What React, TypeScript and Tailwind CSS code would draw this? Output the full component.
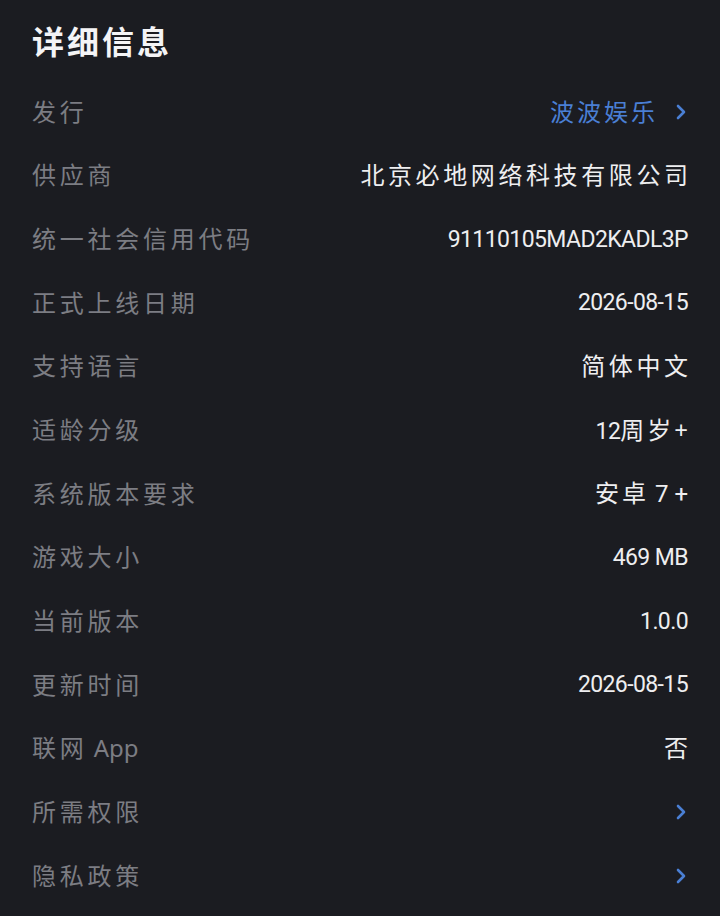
import type { ReactNode } from 'react'

type Row = {
  label: ReactNode
  value?: ReactNode
}

function Chevron() {
  return (
    <svg width="14" height="20" viewBox="0 0 14 20" fill="none" className="shrink-0">
      <path d="M4 4l6 6-6 6" stroke="#4a7fd4" strokeWidth="2.6" strokeLinecap="round" strokeLinejoin="round" />
    </svg>
  )
}

const cjk = 'tracking-[3.75px]'
const vcjk = 'tracking-[3.6px] mr-[-3.6px]'
const num = 'text-[23px] tracking-[-0.6px]'
const numFont = { fontFamily: 'Roboto, "Noto Sans CJK SC", sans-serif' }

const rows: Row[] = [
  {
    label: <span className={cjk}>发行</span>,
    value: (
      <span className="flex items-center gap-[16px] text-[#4a7fd4]">
        <span className="tracking-[3px]">波波娱乐</span>
        <Chevron />
      </span>
    ),
  },
  { label: <span className={cjk}>供应商</span>, value: <span className={vcjk}>北京必地网络科技有限公司</span> },
  {
    label: <span className={cjk}>统一社会信用代码</span>,
    value: (
      <span className={num} style={numFont}>
        91110105MAD2KADL3P
      </span>
    ),
  },
  {
    label: <span className={cjk}>正式上线日期</span>,
    value: (
      <span className={num} style={numFont}>
        2026-08-15
      </span>
    ),
  },
  { label: <span className={cjk}>支持语言</span>, value: <span className={vcjk}>简体中文</span> },
  {
    label: <span className={cjk}>适龄分级</span>,
    value: (
      <span className="flex items-baseline">
        <span className={num} style={numFont}>
          12
        </span>
        <span className="tracking-[3px]">周岁</span>+
      </span>
    ),
  },
  {
    label: <span className={cjk}>系统版本要求</span>,
    value: (
      <span className="flex items-baseline">
        <span className="tracking-[3px]">安卓</span>
        <span className="text-[24px]" style={numFont}>
          &nbsp;7 +
        </span>
      </span>
    ),
  },
  {
    label: <span className={cjk}>游戏大小</span>,
    value: (
      <span className={num} style={numFont}>
        469 MB
      </span>
    ),
  },
  {
    label: <span className={cjk}>当前版本</span>,
    value: (
      <span className={num} style={numFont}>
        1.0.0
      </span>
    ),
  },
  {
    label: <span className={cjk}>更新时间</span>,
    value: (
      <span className={num} style={numFont}>
        2026-08-15
      </span>
    ),
  },
  {
    label: (
      <span>
        <span className={cjk}>联网</span> App
      </span>
    ),
    value: <span>否</span>,
  },
  { label: <span className={cjk}>所需权限</span>, value: <Chevron /> },
  { label: <span className={cjk}>隐私政策</span>, value: <Chevron /> },
]

export default function App() {
  return (
    <div
      className="min-h-[916px] w-full bg-[#1b1c21] px-[32px] pt-[20px]"
      style={{ fontFamily: '"Noto Sans", "Noto Sans CJK SC", sans-serif' }}
    >
      <h1 className="h-[44px] text-[32px] font-bold leading-[44px] tracking-[3px] text-[#f4f4f6]">详细信息</h1>
      <div className="mt-[16px] flex flex-col">
        {rows.map((row, i) => (
          <div key={i} className="flex h-[63.67px] items-center justify-between">
            <div className="text-[24px] leading-none text-[#7c7d83]">{row.label}</div>
            <div className="flex items-center text-[24px] leading-none text-[#eeeef0]">{row.value}</div>
          </div>
        ))}
      </div>
    </div>
  )
}
